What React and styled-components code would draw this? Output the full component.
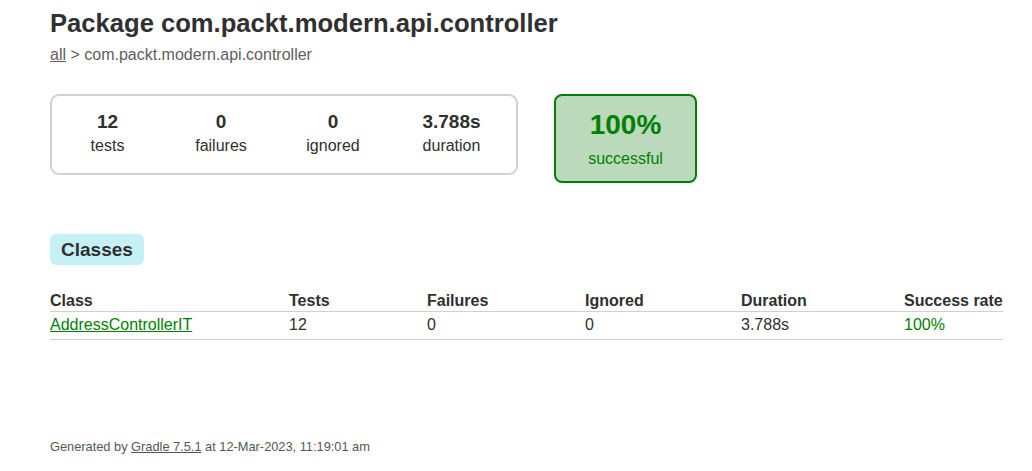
import React from 'react';
import styled, { createGlobalStyle } from 'styled-components';

const Global = createGlobalStyle`
  html, body { margin: 0; padding: 0; background: #fff; }
  body {
    font-family: "Liberation Sans", Arial, sans-serif;
    font-size: 16px;
    color: #303030;
  }
`;

const Content = styled.div`
  padding: 7px 29px 0 50px;
`;

const Title = styled.h1`
  margin: 0;
  font-size: 25.6px;
  font-weight: bold;
  line-height: 32px;
`;

const Breadcrumbs = styled.div`
  margin-top: 7px;
  color: #606060;
  line-height: 18px;

  a { color: #606060; }
`;

const Summary = styled.div`
  display: flex;
  align-items: flex-start;
  margin-top: 30px;
`;

const Group = styled.div`
  display: flex;
  border: solid 2px #d0d0d0;
  border-radius: 9px;
  height: 77px;
  box-sizing: content-box;
`;

const InfoBox = styled.div`
  width: ${p => p.w}px;
  padding-top: 15px;
  text-align: center;
`;

const Counter = styled.div`
  font-size: 19px;
  font-weight: bold;
  line-height: 22px;
  margin-bottom: 4px;
`;

const Label = styled.div`
  line-height: 18px;
`;

const SuccessRate = styled.div`
  width: 139px;
  height: 85px;
  margin-left: 36px;
  border: solid 2px #008000;
  border-radius: 8px;
  background: #bbd9bb;
  color: #008000;
  text-align: center;
  box-sizing: content-box;
`;

const Percent = styled.div`
  font-size: 28px;
  font-weight: bold;
  line-height: 32px;
  margin-top: 13px;
  margin-bottom: 9px;
`;

const Tab = styled.h2`
  display: inline-block;
  margin: 51px 0 0;
  padding: 5px 11px;
  background: #c5f0f5;
  border-radius: 6px;
  font-size: 19px;
  font-weight: bold;
  line-height: 21px;
`;

const Table = styled.table`
  border-collapse: collapse;
  width: 953px;
  margin-top: 26px;
  table-layout: fixed;
`;

const Th = styled.th`
  text-align: left;
  font-weight: bold;
  padding: 0 0 1px;
  border-bottom: solid 1px #d0d0d0;
  line-height: 19px;
  width: ${p => p.w}px;
`;

const Td = styled.td`
  text-align: left;
  padding: 4px 0 5px;
  border-bottom: solid 1px #d0d0d0;
  line-height: 18px;
  color: ${p => (p.success ? '#008000' : '#303030')};

  a { color: #008000; }
`;

const Footer = styled.div`
  margin-top: 99px;
  font-size: 12.8px;
  line-height: 15px;
  color: #505a50;

  a { color: #505a50; }
`;

const columns = [
  ['Class', 239],
  ['Tests', 138],
  ['Failures', 158],
  ['Ignored', 156],
  ['Duration', 163],
  ['Success rate', 99],
];

const counters = [
  ['12', 'tests', 111],
  ['0', 'failures', 116],
  ['0', 'ignored', 108],
  ['3.788s', 'duration', 129],
];

export default function App() {
  return (
    <>
      <Global />
      <Content>
        <Title>Package com.packt.modern.api.controller</Title>
        <Breadcrumbs>
          <a href="#">all</a> &gt; com.packt.modern.api.controller
        </Breadcrumbs>
        <Summary>
          <Group>
            {counters.map(([n, l, w]) => (
              <InfoBox key={l} w={w}>
                <Counter>{n}</Counter>
                <Label>{l}</Label>
              </InfoBox>
            ))}
          </Group>
          <SuccessRate>
            <Percent>100%</Percent>
            <Label>successful</Label>
          </SuccessRate>
        </Summary>
        <Tab>Classes</Tab>
        <Table>
          <thead>
            <tr>
              {columns.map(([c, w]) => (
                <Th key={c} w={w}>{c}</Th>
              ))}
            </tr>
          </thead>
          <tbody>
            <tr>
              <Td><a href="#">AddressControllerIT</a></Td>
              <Td>12</Td>
              <Td>0</Td>
              <Td>0</Td>
              <Td>3.788s</Td>
              <Td success>100%</Td>
            </tr>
          </tbody>
        </Table>
        <Footer>
          Generated by <a href="#">Gradle 7.5.1</a> at 12-Mar-2023, 11:19:01 am
        </Footer>
      </Content>
    </>
  );
}
